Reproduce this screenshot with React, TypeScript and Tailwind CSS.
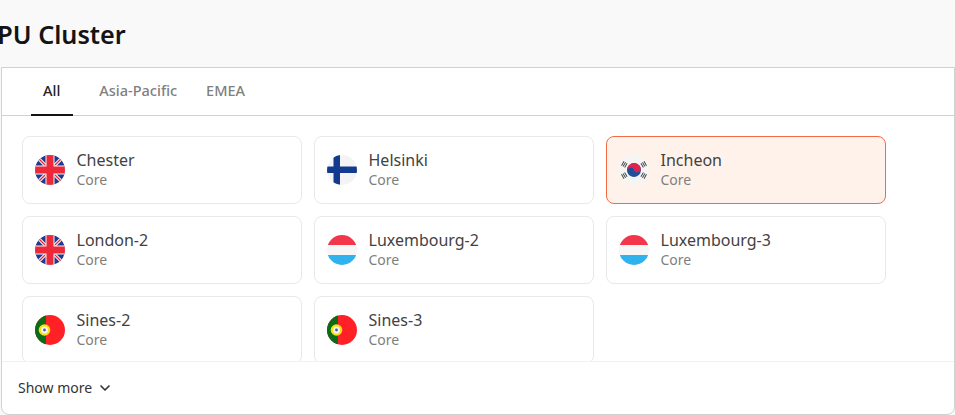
import { ChevronDown } from "lucide-react";

type Flag = "uk" | "fi" | "kr" | "lu" | "pt";

const SITES: Array<{ name: string; flag: Flag; selected?: boolean }> = [
  { name: "Chester", flag: "uk" },
  { name: "Helsinki", flag: "fi" },
  { name: "Incheon", flag: "kr", selected: true },
  { name: "London-2", flag: "uk" },
  { name: "Luxembourg-2", flag: "lu" },
  { name: "Luxembourg-3", flag: "lu" },
  { name: "Sines-2", flag: "pt" },
  { name: "Sines-3", flag: "pt" },
];

const TABS = ["All", "Asia-Pacific", "EMEA"];

function FlagArt({ flag }: { flag: Flag }) {
  if (flag === "uk") {
    return (
      <>
        <rect width="30" height="30" fill="#1f3a8f" />
        <path d="M2 2 28 28M28 2 2 28" stroke="#f5f5f5" strokeWidth="3.200" />
        <path d="M2 2 28 28M28 2 2 28" stroke="#e8253a" strokeWidth="1.200" />
        <path d="M10.500 0H19.500V10.500H30V19.500H19.500V30H10.500V19.500H0V10.500H10.500Z" fill="#f5f5f5" />
        <path d="M11.500 0H18.500V11.500H30V18.500H18.500V30H11.500V18.500H0V11.500H11.500Z" fill="#ed2939" />
      </>
    );
  }
  if (flag === "fi") {
    return (
      <>
        <rect width="30" height="30" fill="#f4f4f6" />
        <path d="M6.500 0H13V11.500H30V18H13V30H6.500V18H0V11.500H6.500Z" fill="#123b8f" />
      </>
    );
  }
  if (flag === "kr") {
    return (
      <>
        <rect width="30" height="30" fill="#f5f5f5" />
        {[30, 150, 210, 330].map((a) => (
          <path
            key={a}
            d="M2 12.500V17.500M3.800 12.500V17.500M5.600 12.500V17.500"
            stroke="#4a4a4a"
            strokeWidth="1"
            transform={`rotate(${a} 15 15)`}
          />
        ))}
        <g transform="rotate(-20 15 15)">
          <circle cx="15" cy="15" r="7" fill="#1d4f9c" />
          <path d="M8 15A7 7 0 0 1 22 15A3.500 3.500 0 0 1 15 15A3.500 3.500 0 0 0 8 15Z" fill="#e0234e" />
        </g>
      </>
    );
  }
  if (flag === "lu") {
    return (
      <>
        <rect width="30" height="10" fill="#f4364c" />
        <rect y="10" width="30" height="10" fill="#f6f6f6" />
        <rect y="20" width="30" height="10" fill="#2fb2ee" />
      </>
    );
  }
  return (
    <>
      <rect width="30" height="30" fill="#ff2126" />
      <rect width="11" height="30" fill="#0b6b16" />
      <circle cx="9.500" cy="15" r="5.800" fill="#f7e017" />
      <circle cx="9.500" cy="15" r="3.400" fill="#f5f5f5" />
      <circle cx="9.500" cy="15" r="1.400" fill="#3f5fa8" />
    </>
  );
}

function RoundFlag({ flag, id }: { flag: Flag; id: string }) {
  return (
    <svg width="30" height="30" viewBox="0 0 30 30" className="shrink-0">
      <clipPath id={id}>
        <circle cx="15" cy="15" r="15" />
      </clipPath>
      <g clipPath={`url(#${id})`}>
        <FlagArt flag={flag} />
      </g>
    </svg>
  );
}

export default function App() {
  return (
    <div className="flex h-[415px] w-[955px] flex-col overflow-hidden bg-[#f9f9f9] font-['Noto_Sans',sans-serif] text-[#1f1f1f]">
      <div className="flex h-[67px] shrink-0 items-center">
        <h1 className="ml-[-21px] text-[25.200px] leading-[32px] font-semibold whitespace-nowrap text-[#141414]">
          GPU Cluster
        </h1>
      </div>

      <div className="ml-px flex min-h-0 flex-1 flex-col overflow-hidden rounded-b-lg border border-[#d1d1d1] bg-white">
        <div className="flex h-[48px] shrink-0 border-b border-[#d1d1d1] pl-[29px]">
          {TABS.map((t, i) => (
            <div
              key={t}
              className={`flex h-[48px] items-center border-b-2 text-[14.500px] font-medium ${
                i === 0
                  ? "mr-3 border-[#141414] pr-[13px] pl-3 text-[#242424]"
                  : "mr-px border-transparent px-[14px] text-[#808080]"
              }`}
            >
              {t}
            </div>
          ))}
        </div>

        <div className="grid min-h-0 flex-1 grid-cols-[280px_280px_280px] content-start gap-3 overflow-hidden pt-5 pl-5">
          {SITES.map((s, i) => (
            <div
              key={s.name}
              className={`flex h-[68px] items-center gap-[11.500px] rounded-lg border pl-3 ${
                s.selected
                  ? "border-[#f26b45] bg-[#fff2eb]"
                  : "border-[#e8e8e8] bg-white"
              }`}
            >
              <RoundFlag flag={s.flag} id={`flag-${i}`} />
              <div className="-mt-[2px]">
                <div className="text-[16px] leading-[22px] text-[#424242]">{s.name}</div>
                <div className="text-[14px] leading-[18px] text-[#808080]">Core</div>
              </div>
            </div>
          ))}
        </div>

        <div className="flex h-[53px] shrink-0 items-center gap-[5px] border-t border-[#f0f0f0] pb-px pl-4 text-[14px] text-[#333333]">
          Show more
          <ChevronDown size={16} strokeWidth={2.500} />
        </div>
      </div>
    </div>
  );
}
